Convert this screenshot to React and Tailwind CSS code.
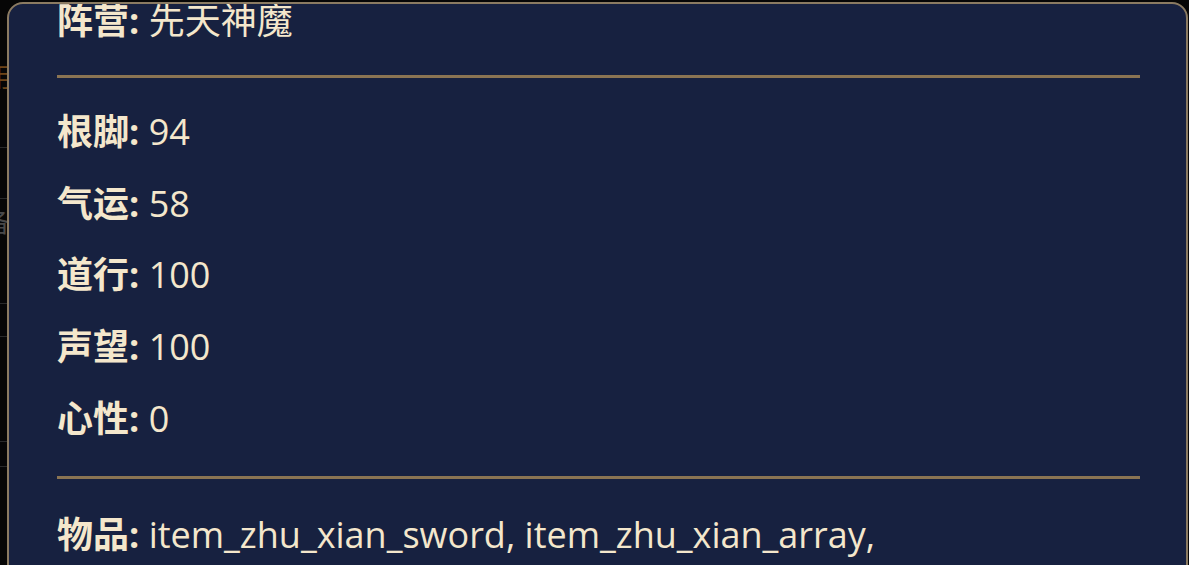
export default function App() {
  const rows = [
    ["根脚", "94"],
    ["气运", "58"],
    ["道行", "100"],
    ["声望", "100"],
    ["心性", "0"],
  ];
  const font = { fontFamily: '"Open Sans", "Noto Sans CJK SC", sans-serif' };
  return (
    <div className="flex w-[1189px] h-[565px] bg-[#060606] overflow-hidden" style={font}>
      {/* faint background content peeking at the left edge */}
      <div className="w-[7px] shrink-0 flex flex-col overflow-hidden">
        <div className="h-[62px]" />
        <div className="h-[30px] text-[26px] leading-[30px] text-[#9a6020] ml-[-14px] opacity-70">用</div>
        <div className="h-[56px] border-b border-[#2a2a2a]" />
        <div className="h-[51px] border-b border-[#2a2a2a]" />
        <div className="h-[40px] pt-[8px] text-[26px] leading-[30px] text-[#666] ml-[-16px] opacity-70">备</div>
        <div className="h-[65px] border-b border-[#2a2a2a]" />
        <div className="h-[33px] border-b border-[#2a2a2a]" />
        <div className="h-[105px] border-b border-[#2a2a2a]" />
        <div className="h-[25px] border-b border-[#2a2a2a]" />
      </div>
      <div className="mt-[2px] w-[1181px] h-[620px] shrink-0 rounded-[16px] border-2 border-[#8b7b62] bg-[#172140] overflow-hidden">
        <div className="pl-[48px] pr-[46px] mt-[-5px] text-[#f4e7cc] text-[36px] leading-[44px]">
          <p><span className="font-bold">阵营:</span> 先天神魔</p>
          <div className="mt-[32px] mb-[32px] h-[3px] bg-[#8a7453]" />
          <div className="flex flex-col gap-[27.7px]">
            {rows.map(([k, v]) => (
              <p key={k}><span className="font-bold">{k}:</span> {v}</p>
            ))}
          </div>
          <div className="mt-[35px] mb-[34px] h-[3px] bg-[#8a7453]" />
          <p><span className="font-bold">物品:</span> item_zhu_xian_sword, item_zhu_xian_array,</p>
        </div>
      </div>
    </div>
  );
}
